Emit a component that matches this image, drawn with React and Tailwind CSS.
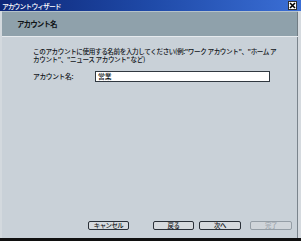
export default function App() {
  const jp = { fontFamily: '"Noto Sans CJK JP", "Noto Sans", sans-serif' };
  return (
    <div className="w-[301px] h-[241px] flex flex-col bg-[#c9d1d8] overflow-hidden" style={jp}>
      <div className="h-[11px] flex items-center justify-between pl-[2px] pr-[4px] bg-gradient-to-r from-[#0e2778] via-[#1f4aa8] to-[#3b6fd6]">
        <span className="text-[6.8px] leading-[8px] tracking-[-1px] font-medium text-white whitespace-nowrap">アカウント ウィザード</span>
        <div className="w-[9px] h-[9px] bg-white border border-[#303030] flex items-center justify-center">
          <svg width="7" height="7" viewBox="0 0 7 7">
            <path d="M1 1L6 6M6 1L1 6" stroke="#000" strokeWidth="1.6" />
          </svg>
        </div>
      </div>
      <div className="flex-1 flex flex-col border-l-[2px] border-l-[#d3d9de] border-r-[3px] border-r-[#d5dadf]">
        <div className="h-[1px] bg-[#b5c2ca]" />
        <div className="h-[24px] bg-[#8fa1ab] flex items-center pl-[15px] border-r border-r-[#707c84]">
          <span className="text-[7.5px] font-bold tracking-[-0.9px] text-[#101418] whitespace-nowrap">アカウント名</span>
        </div>
        <div className="h-[1px] bg-[#e6eaee]" />
        <div className="flex-1 flex flex-col border-r border-r-[#7a848c] pl-[31px] pt-[11px]">
          <div className="text-[6.6px] leading-[7.5px] tracking-[-0.4px] font-medium text-[#101418] whitespace-nowrap">
            <div>このアカウントに使用する名前を入力してください(例:"ワーク アカウント"、"ホーム ア</div>
            <div>カウント"、"ニュース アカウント" など)</div>
          </div>
          <div className="flex items-center mt-[8px] h-[11px]">
            <span className="w-[62px] text-[6.8px] tracking-[-0.4px] font-medium text-[#101418] whitespace-nowrap">アカウント名:</span>
            <div className="w-[175px] h-[11px] bg-white border border-[#303840] flex items-center pl-[2px]">
              <span className="text-[6.8px] leading-[7px] font-medium text-[#101418]">営業</span>
            </div>
          </div>
          <div className="mt-auto mb-[8px] flex items-center h-[9px] -ml-[31px]">
            <div className="ml-[86px] w-[41px] h-[9px] rounded-[2px] border border-[#2a3038] bg-[#d6dade] flex items-center justify-center">
              <span className="text-[6.4px] leading-[7px] tracking-[-0.5px] font-medium text-[#101418]">キャンセル</span>
            </div>
            <div className="ml-[24px] w-[41px] h-[9px] rounded-[2px] border border-[#2a3038] bg-[#d6dade] flex items-center justify-center">
              <span className="text-[6.4px] leading-[7px] tracking-[-0.5px] font-medium text-[#101418]">戻る</span>
            </div>
            <div className="ml-[5px] w-[42px] h-[9px] rounded-[2px] border border-[#2a3038] bg-[#d6dade] flex items-center justify-center">
              <span className="text-[6.4px] leading-[7px] tracking-[-0.5px] font-medium text-[#101418]">次へ</span>
            </div>
            <div className="ml-[9px] w-[42px] h-[9px] rounded-[2px] border border-[#959ea6] bg-[#d0d5da] flex items-center justify-center">
              <span className="text-[6.4px] leading-[7px] tracking-[-0.5px] font-medium text-[#9aa3ab]">完了</span>
            </div>
          </div>
        </div>
      </div>
      <div className="h-[3px] bg-[#101010]" />
    </div>
  );
}
